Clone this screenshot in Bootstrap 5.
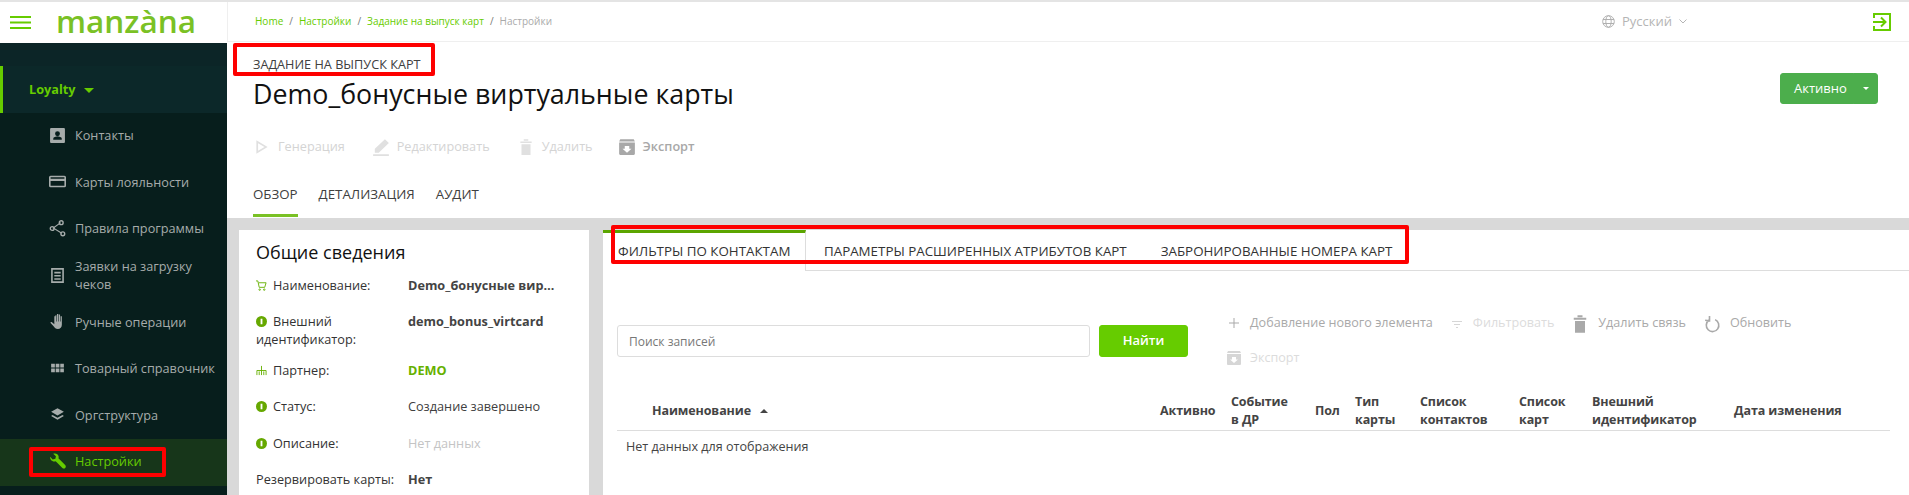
<!DOCTYPE html>
<html lang="ru">
<head>
    <meta charset="UTF-8">
    <meta name="viewport" content="width=device-width, initial-scale=1.0">
    <title>Manzana</title>
    <link href="https://cdn.jsdelivr.net/npm/bootstrap@5.3.0/dist/css/bootstrap.min.css" rel="stylesheet">
    <style>
        html, body { height: 495px; overflow: hidden; }
        body { font-family: "Open Sans", "Liberation Sans", sans-serif; font-size: 13px; color: #404040; background: #fff; }
        .app-wrap { height: 495px; border-top: 2px solid #e4e4e4; position: relative; overflow: hidden; }
        .side-col { width: 227px; flex: none; background: #071e1c; height: 493px; }
        .logo-bar { height: 41px; background: #fff; padding-left: 10px; gap: 25px; }
        .logo-text { font-size: 31.5px; font-weight: 600; color: #7ac125; line-height: 38px; margin-top: -3px; }
        .side-gap { height: 23px; background: #0c2527; }
        .loyalty-row { height: 47px; background: #0c2829; border-left: 3px solid #66cc00; padding-left: 26px; color: #66cc00; font-weight: 700; font-size: 12.7px; gap: 8px; }
        .loyalty-caret { width: 0; height: 0; border-left: 5px solid transparent; border-right: 5px solid transparent; border-top: 5px solid #66cc00; margin-top: 2px; }
        .side-item { height: 46.6px; padding: 0 0 2px 49px; color: #a6acab; gap: 9px; text-decoration: none; line-height: 18px; font-size: 12.7px; }
        .side-item svg { width: 17px; height: 17px; flex: none; fill: #a6acab; }
        .side-item.on { background: #17361a; color: #66cc00; }
        .side-item.on svg { fill: #66cc00; }
        .main-col { background: #d9d9d9; min-width: 0; }
        .top-strip { height: 40px; background: #fff; border-bottom: 1px solid #efefef; border-left: 1px solid #efefef; padding-left: 27px; }
        .crumbs { font-size: 10px; margin: 0; --bs-breadcrumb-divider-color: #777; --bs-breadcrumb-item-padding-x: 6px; }
        .crumbs a { color: #66cc00; text-decoration: none; }
        .crumbs .active { color: #aaa; }
        .lang-pick { color: #b5b5b5; font-size: 13px; gap: 7px; margin-left: auto; margin-right: 186px; }
        .exit-ico { width: 18px; height: 18px; margin-right: 18px; }
        .head-block { height: 176px; background: #fff; padding-left: 26px; padding-right: 31px; }
        .head-over { font-size: 12.7px; line-height: 18px; padding-top: 13px; color: #404040; }
        .head-title { font-size: 26.8px; font-weight: 400; color: #111; margin: 3px 0 0; line-height: 36px; }
        .state-btn { --bs-btn-bg: #4cae4c; --bs-btn-color: #fff; --bs-btn-border-color: #4cae4c; --bs-btn-font-size: 13px; --bs-btn-padding-y: 0; --bs-btn-padding-x: 0; --bs-btn-border-radius: 3px; height: 31px; line-height: 29px; }
        .state-main { width: 74px; padding-left: 13px; text-align: left; }
        .state-split { width: 25px; }
        .state-group { margin-top: 31px; }
        .act-row { gap: 27px; margin-top: 24px; height: 22px; color: #d4d4d4; font-size: 12.7px; }
        .act-item { gap: 7px; }
        .act-item svg { width: 18px; height: 18px; fill: #e0e0e0; }
        .act-item.live { color: #a8a8a8; font-weight: 600; margin-left: -2px; }
        .act-item.live svg { fill: #a8a8a8; }
        .head-tabs { gap: 21px; margin-top: 26px; }
        .head-tabs a { color: #404040; text-decoration: none; height: 33px; font-size: 13.3px; line-height: 20px; }
        .head-tabs a.cur { border-bottom: 3px solid #7ac125; }
        .body-row { padding: 12px 0 0 12px; gap: 14px; height: 275px; }
        .info-box { width: 350px; flex: none; background: #fff; padding: 9px 17px; height: 265px; font-size: 12.7px; }
        .info-title { font-size: 18px; font-weight: 400; color: #111; margin: 0 0 11px; line-height: 26px; }
        .info-line { display: flex; line-height: 18px; margin-bottom: 18px; }
        .info-line.wrapped { margin-bottom: 13px; }
        .info-line.roomy { margin-bottom: 19px; }
        .info-key { width: 152px; flex: none; color: #333; }
        .info-key svg { width: 11px; height: 11px; margin-right: 6px; vertical-align: -1px; }
        .info-val { min-width: 0; white-space: nowrap; overflow: hidden; text-overflow: ellipsis; width: 148px; }
        .strong-val { font-weight: 700; color: #444; }
        .grn-val { font-weight: 700; color: #66b000; }
        .none-val { color: #c4c4c4; }
        .work-box { flex: 1; background: #fff; min-width: 0; height: 265px; }
        .tab-line { height: 41px; font-size: 13.35px; color: #333; white-space: nowrap; }
        .tab-on { width: 203px; flex: none; border-top: 3px solid #5ba500; border-right: 1px solid #ddd; padding-left: 15px; padding-top: 8px; height: 41px; }
        .tab-rest { flex: 1; border-bottom: 1px solid #ddd; gap: 34px; padding-left: 18px; padding-top: 11px; height: 41px; }
        .search-zone { margin: 54px 0 0 14px; height: 88px; }
        .search-inp { width: 473px; height: 32px; font-size: 12px; border-radius: 3px; padding: 0 11px; color: #777; border-color: #ddd; }
        .search-inp::placeholder { color: #777; }
        .find-btn { width: 89px; height: 32px; margin-left: 9px; padding: 0; background: #66cc00; border-color: #66cc00; color: #fff; font-size: 13px; font-weight: 600; border-radius: 3px; }
        .bar-tools { margin-left: 38px; margin-top: -19px; color: #c3c3c3; font-size: 12.6px; }
        .bar-row { gap: 16px; height: 35px; }
        .bar-item { gap: 8px; }
        .bar-item svg { width: 16px; height: 16px; fill: #d6d6d6; }
        .bar-item.mid { color: #a9a9a9; }
        .bar-item.mid svg { fill: #a9a9a9; }
        .bar-item svg.big-ico { width: 20px; height: 20px; }
        .bar-item svg.line-ico { fill: none; }
        .bar-item.pale { color: #dcdcdc; }
        .data-tbl { margin: -20px 0 0 14px; width: 1273px; table-layout: fixed; --bs-table-border-color: #ddd; }
        .data-tbl th { font-weight: 700; font-size: 12.5px; line-height: 18.300px; padding: 0 8px; vertical-align: middle; color: #444; border-bottom: 1px solid #ddd; letter-spacing: -.1px; }
        .data-tbl td { font-size: 12.6px; border: 0; padding: 7.500px 9px; color: #444; }
        .name-head { padding-left: 35px !important; }
        .sort-up { display: inline-block; width: 0; height: 0; border-left: 4px solid transparent; border-right: 4px solid transparent; border-bottom: 4px solid #444; margin-left: 6px; vertical-align: 2px; }
        .red-mark { position: absolute; border: 4px solid #fe0000; border-radius: 2px; pointer-events: none; }
        .mark-a { left: 233px; top: 41px; width: 202px; height: 33px; }
        .mark-b { left: 611px; top: 223px; width: 798px; height: 39px; }
        .mark-c { left: 29px; top: 445px; width: 137px; height: 30px; }
    </style>
</head>
<body>
<div class="app-wrap d-flex">
    <!-- sidebar -->
    <div class="side-col">
        <div class="logo-bar d-flex align-items-center">
            <svg width="21" height="13" viewBox="0 0 21 13"><path d="M0 1h21M0 6.500h21M0 12h21" stroke="#66cc00" stroke-width="2" fill="none"/></svg>
            <span class="logo-text">manzàna</span>
        </div>
        <div class="side-gap"></div>
        <div class="loyalty-row d-flex align-items-center">Loyalty <span class="loyalty-caret"></span></div>
        <a class="side-item d-flex align-items-center" href="#"><svg viewBox="0 0 16 16"><path d="M2 1h12a1 1 0 0 1 1 1v12a1 1 0 0 1-1 1H2a1 1 0 0 1-1-1V2a1 1 0 0 1 1-1zm6 3a2.300 2.300 0 1 0 0 4.600A2.300 2.300 0 0 0 8 4zm-4 8h8v-1c0-1.500-2.600-2-4-2s-4 .5-4 2z" fill-rule="evenodd"/></svg>Контакты</a>
        <a class="side-item d-flex align-items-center" href="#"><svg viewBox="0 0 16 16"><path d="M1.500 2.500h13A1.500 1.500 0 0 1 16 4v8a1.500 1.500 0 0 1-1.500 1.500h-13A1.500 1.500 0 0 1 0 12V4a1.500 1.500 0 0 1 1.500-1.500zM1.500 4v1.500h13V4zm0 3.500V12h13V7.500z" fill-rule="evenodd"/></svg>Карты лояльности</a>
        <a class="side-item d-flex align-items-center" href="#"><svg viewBox="0 0 16 16"><path d="M11 2.500 4 7.500l8 5" stroke="#a6acab" fill="none"/><circle cx="11.500" cy="2.500" r="1.800" fill="none" stroke="#a6acab" stroke-width="1.300"/><circle cx="3" cy="8" r="1.800" fill="none" stroke="#a6acab" stroke-width="1.300"/><circle cx="13" cy="13" r="1.800" fill="none" stroke="#a6acab" stroke-width="1.300"/></svg>Правила программы</a>
        <a class="side-item d-flex align-items-center" href="#"><svg viewBox="0 0 16 16"><path d="M2 1h12v14H2zm1.500 1.500v11h9v-11zM5 4.500h6V6H5zm0 3h6V9H5zm0 3h6V12H5z" fill-rule="evenodd"/></svg><span>Заявки на загрузку чеков</span></a>
        <a class="side-item d-flex align-items-center" href="#"><svg viewBox="0 0 16 16"><path d="M6 2h1v6h.5V1h1.200v7h.5V1.500h1.200V8h.5V3h1.200v8c0 2.500-1.500 4-3.800 4-2 0-3-1-4-2.500L1.500 9.500c-.4-.8.6-1.500 1.300-.8L5 10.500V3h1z"/></svg>Ручные операции</a>
        <a class="side-item d-flex align-items-center" href="#"><svg viewBox="0 0 16 16"><path d="M2 3.500h3.500V7H2zm4.300 0h3.500V7H6.300zm4.300 0H14V7h-3.400zM2 8h3.500v3.500H2zm4.300 0h3.500v3.500H6.300zm4.300 0H14v3.500h-3.400z"/></svg>Товарный справочник</a>
        <a class="side-item d-flex align-items-center" href="#"><svg viewBox="0 0 16 16"><path d="M8 2l6 3.500L8 9 2 5.500zM3.300 8.500 8 11l4.700-2.500L14 9.300 8 13 2 9.300z"/></svg>Оргструктура</a>
        <a class="side-item on d-flex align-items-center" href="#"><svg viewBox="0 0 16 16"><path d="M1 3.500 3.500 6 6 5.500 6.500 3 4 .8C6-.2 8.500.8 9 3c.2.700.1 1.500-.1 2l6.300 6.300c.8.800.8 1.900.1 2.700s-1.900.8-2.700 0L6.300 7.700C4.500 8.500 1 7.500 1 3.500z"/></svg>Настройки</a>
    </div>

    <!-- main area -->
    <div class="main-col flex-grow-1">
        <div class="top-strip d-flex align-items-center">
            <nav aria-label="breadcrumb">
                <ol class="breadcrumb crumbs">
                    <li class="breadcrumb-item"><a href="#">Home</a></li>
                    <li class="breadcrumb-item"><a href="#">Настройки</a></li>
                    <li class="breadcrumb-item"><a href="#">Задание на выпуск карт</a></li>
                    <li class="breadcrumb-item active" aria-current="page">Настройки</li>
                </ol>
            </nav>
            <div class="lang-pick d-flex align-items-center">
                <svg width="13" height="13" viewBox="0 0 13 13" fill="none" stroke="#b0b0b0"><circle cx="6.500" cy="6.500" r="5.800"/><ellipse cx="6.500" cy="6.500" rx="2.700" ry="5.800"/><path d="M1 4.500h11M1 8.500h11"/></svg>
                <span>Русский</span>
                <svg width="8" height="5" viewBox="0 0 8 5" fill="none" stroke="#b5b5b5"><path d="M.5.500 4 4 7.500.5"/></svg>
            </div>
            <svg class="exit-ico" viewBox="0 0 18 18" fill="none" stroke="#66cc00" stroke-width="2"><path d="M1 5V1h16v16H1v-4"/><path d="M0 9h12M8 4.500 12.500 9 8 13.500"/></svg>
        </div>

        <div class="head-block d-flex justify-content-between">
            <div>
                <div class="head-over">ЗАДАНИЕ НА ВЫПУСК КАРТ</div>
                <h1 class="head-title">Demo_бонусные виртуальные карты</h1>
                <div class="act-row d-flex align-items-center">
                    <span class="act-item d-flex align-items-center"><svg viewBox="0 0 16 16"><path d="M3 2l10 6-10 6zm1.500 2.600v6.800L10.200 8z" fill-rule="evenodd"/></svg>Генерация</span>
                    <span class="act-item d-flex align-items-center"><svg viewBox="0 0 16 16"><path d="M11.500 1 15 4.500 6 13H2.500V9.500zM1 14.500h14V16H1z"/></svg>Редактировать</span>
                    <span class="act-item d-flex align-items-center"><svg viewBox="0 0 16 16"><path d="M3 3h10v1.500H3zm3-2h4v1.500H6zM4 5.500h8V15H4z"/></svg>Удалить</span>
                    <span class="act-item live d-flex align-items-center"><svg viewBox="0 0 16 16"><path d="M2 1h12l1 2H1zM1 4h14v10a1 1 0 0 1-1 1H2a1 1 0 0 1-1-1zm5 3v2.500H4L8 13l4-3.500h-2V7z" fill-rule="evenodd"/></svg>Экспорт</span>
                </div>
                <div class="head-tabs d-flex">
                    <a class="cur" href="#">ОБЗОР</a>
                    <a href="#">ДЕТАЛИЗАЦИЯ</a>
                    <a href="#">АУДИТ</a>
                </div>
            </div>
            <div class="state-group">
                <div class="btn-group">
                    <button type="button" class="btn state-btn state-main">Активно</button>
                    <button type="button" class="btn state-btn state-split dropdown-toggle dropdown-toggle-split"></button>
                </div>
            </div>
        </div>

        <div class="body-row d-flex">
            <div class="info-box">
                <h2 class="info-title">Общие сведения</h2>
                <div class="info-line"><span class="info-key"><svg viewBox="0 0 12 12" fill="none" stroke="#66b000"><path d="M0 1h2l1.500 7h6L11 3H3"/><circle cx="4" cy="10.500" r=".8"/><circle cx="9" cy="10.500" r=".8"/></svg>Наименование:</span><span class="info-val strong-val">Demo_бонусные виртуальные карты</span></div>
                <div class="info-line wrapped"><span class="info-key"><svg viewBox="0 0 12 12"><circle cx="6" cy="6" r="6" fill="#66a800"/><rect x="5" y="3" width="2" height="6" fill="#fff"/></svg>Внешний идентификатор:</span><span class="info-val strong-val">demo_bonus_virtcard</span></div>
                <div class="info-line"><span class="info-key"><svg viewBox="0 0 12 12" fill="none" stroke="#66b000"><path d="M6 1v10M1 11V6h10v5M3.500 11V7M8.500 11V7"/></svg>Партнер:</span><span class="info-val grn-val">DEMO</span></div>
                <div class="info-line roomy"><span class="info-key"><svg viewBox="0 0 12 12"><circle cx="6" cy="6" r="6" fill="#66a800"/><rect x="5" y="3" width="2" height="6" fill="#fff"/></svg>Статус:</span><span class="info-val">Создание завершено</span></div>
                <div class="info-line"><span class="info-key"><svg viewBox="0 0 12 12"><circle cx="6" cy="6" r="6" fill="#66a800"/><rect x="5" y="3" width="2" height="6" fill="#fff"/></svg>Описание:</span><span class="info-val none-val">Нет данных</span></div>
                <div class="info-line"><span class="info-key">Резервировать карты:</span><span class="info-val strong-val">Нет</span></div>
            </div>

            <div class="work-box">
                <div class="tab-line d-flex">
                    <div class="tab-on">ФИЛЬТРЫ ПО КОНТАКТАМ</div>
                    <div class="tab-rest d-flex"><span>ПАРАМЕТРЫ РАСШИРЕННЫХ АТРИБУТОВ КАРТ</span><span>ЗАБРОНИРОВАННЫЕ НОМЕРА КАРТ</span></div>
                </div>
                <div class="search-zone d-flex align-items-start">
                    <input class="form-control search-inp" type="text" placeholder="Поиск записей">
                    <button type="button" class="btn find-btn">Найти</button>
                    <div class="bar-tools">
                        <div class="bar-row d-flex align-items-center">
                            <span class="bar-item mid d-flex align-items-center"><svg viewBox="0 0 16 16"><path d="M7.500 3h1v4.500H13v1H8.500V13h-1V8.500H3v-1h4.500z"/></svg>Добавление нового элемента</span>
                            <span class="bar-item pale d-flex align-items-center"><svg viewBox="0 0 16 16"><path d="M3 6h10v1H3zm2 3h6v1H5zm2 3h2v1H7z"/></svg>Фильтровать</span>
                            <span class="bar-item mid d-flex align-items-center"><svg class="big-ico" viewBox="0 0 16 16"><path d="M3 3h10v1.500H3zm3-2h4v1.500H6zM4 5.500h8V15H4z"/></svg>Удалить связь</span>
                            <span class="bar-item mid d-flex align-items-center"><svg class="big-ico line-ico" viewBox="0 0 16 16" stroke="#a9a9a9" stroke-width="1.300"><path d="M10.500 4.500a5 5 0 1 1-5 .5M6 1.500 6 5.500 2.500 5"/></svg>Обновить</span>
                        </div>
                        <div class="bar-row d-flex align-items-center">
                            <span class="bar-item pale d-flex align-items-center"><svg viewBox="0 0 16 16"><path d="M2 1h12l1 2H1zM1 4h14v10a1 1 0 0 1-1 1H2a1 1 0 0 1-1-1zm5 3v2.500H4L8 13l4-3.500h-2V7z" fill-rule="evenodd"/></svg>Экспорт</span>
                        </div>
                    </div>
                </div>
                <table class="table data-tbl">
                    <colgroup>
                        <col style="width:535px"><col style="width:71px"><col style="width:84px"><col style="width:40px"><col style="width:65px"><col style="width:99px"><col style="width:73px"><col style="width:142px"><col style="width:164px">
                    </colgroup>
                    <thead>
                        <tr>
                            <th class="name-head">Наименование <span class="sort-up"></span></th>
                            <th>Активно</th>
                            <th>Событие<br>в ДР</th>
                            <th>Пол</th>
                            <th>Тип карты</th>
                            <th>Список контактов</th>
                            <th>Список карт</th>
                            <th>Внешний идентификатор</th>
                            <th>Дата изменения</th>
                        </tr>
                    </thead>
                    <tbody>
                        <tr><td colspan="9">Нет данных для отображения</td></tr>
                    </tbody>
                </table>
            </div>
        </div>
    </div>

    <!-- annotation frames drawn over the screenshot -->
    <div class="red-mark mark-a"></div>
    <div class="red-mark mark-b"></div>
    <div class="red-mark mark-c"></div>
</div>
<script src="https://cdn.jsdelivr.net/npm/bootstrap@5.3.0/dist/js/bootstrap.bundle.min.js"></script>
</body>
</html>
